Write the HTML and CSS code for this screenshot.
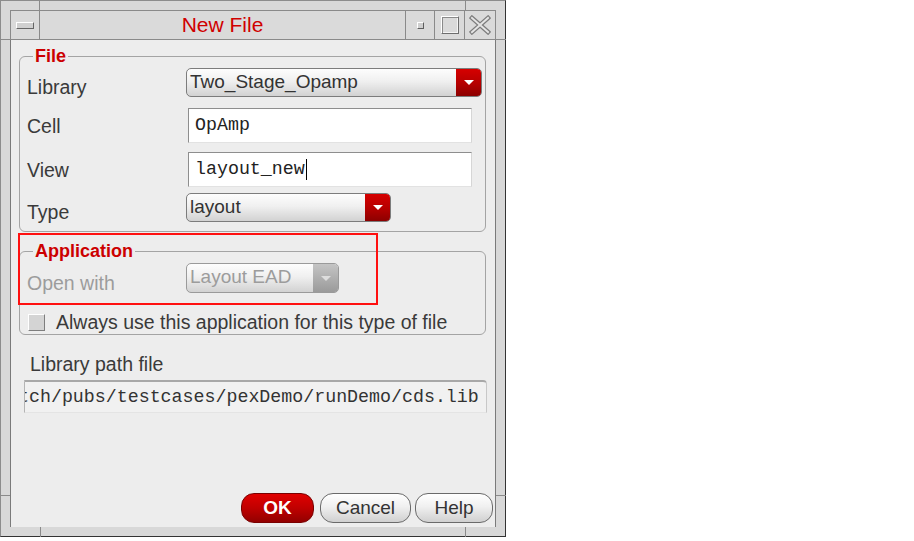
FILE: index.html
```html
<!DOCTYPE html>
<html>
<head>
<meta charset="utf-8">
<title>New File</title>
<link rel="stylesheet" href="styles.css">
</head>
<body>
<div class="window">
  <div class="titlebar">
    <div class="tb-btn tb-menu"><span class="bar"></span></div>
    <div class="title">New File</div>
    <div class="tb-btn tb-min"><span class="dot"></span></div>
    <div class="tb-btn tb-max"><span class="sq"></span></div>
    <div class="tb-btn tb-close">
      <svg width="22" height="20" viewBox="0 0 22 20">
        <path d="M3 3 L19 17 M19 3 L3 17" stroke="#7c7c7c" stroke-width="4.5" stroke-linecap="square" fill="none"/>
        <path d="M3 3 L19 17 M19 3 L3 17" stroke="#e4e4e4" stroke-width="2" stroke-linecap="square" fill="none"/>
      </svg>
    </div>
  </div>
  <div class="content">
    <fieldset class="group group-file">
      <legend>File</legend>
      <div class="row row-end">
        <span class="label">Library</span>
        <div class="combo combo-lib"><span class="combo-text">Two_Stage_Opamp</span><span class="arrow"><span class="tri"></span></span></div>
      </div>
      <div class="row row-cell">
        <span class="label">Cell</span>
        <div class="entry">OpAmp</div>
      </div>
      <div class="row row-view">
        <span class="label">View</span>
        <div class="entry">layout_new<span class="caret"></span></div>
      </div>
      <div class="row row-end row-type">
        <span class="label">Type</span>
        <div class="combo combo-type"><span class="combo-text">layout</span><span class="arrow"><span class="tri"></span></span></div>
      </div>
    </fieldset>
    <fieldset class="group group-app">
      <legend>Application</legend>
      <div class="row row-end">
        <span class="label label-dis">Open with</span>
        <div class="combo combo-dis"><span class="combo-text">Layout EAD</span><span class="arrow"><span class="tri"></span></span></div>
      </div>
      <div class="check-row">
        <span class="checkbox"></span>
        <span class="check-text">Always use this application for this type of file</span>
      </div>
    </fieldset>
    <div class="path-label">Library path file</div>
    <div class="path-entry">tch/pubs/testcases/pexDemo/runDemo/cds.lib</div>
    <div class="buttons">
      <div class="btn btn-ok">OK</div>
      <div class="btn btn-cancel">Cancel</div>
      <div class="btn btn-help">Help</div>
    </div>
    <div class="highlight"></div>
  </div>
  <span class="notch nv n-tl"></span>
  <span class="notch nh n-lt"></span>
  <span class="notch nv n-tr"></span>
  <span class="notch nh n-rt"></span>
  <span class="notch nh n-lb"></span>
  <span class="notch nv n-bl"></span>
  <span class="notch nh n-rb"></span>
  <span class="notch nv n-br"></span>
</div>
</body>
</html>
```
FILE: styles.css
```css
body {
  margin: 0;
  background: #ffffff;
  font-family: "Liberation Sans", Arial, sans-serif;
}

.window {
  position: relative;
  box-sizing: border-box;
  width: 506px;
  height: 537px;
  border: 1px solid;
  border-color: #8c8c8c #333333 #333333 #8c8c8c;
  padding: 9px;
  background: #d8d8d8;
  display: flex;
  flex-direction: column;
}

/* title bar */
.titlebar {
  box-sizing: border-box;
  height: 30px;
  flex: none;
  display: flex;
  border: 1px solid #8a8a8a;
  background: #dadada;
}
.tb-btn {
  flex: none;
  display: flex;
  align-items: center;
  justify-content: center;
}
.tb-menu {
  width: 28px;
  border-right: 1px solid #8a8a8a;
}
.tb-min {
  width: 28px;
  border-left: 1px solid #8a8a8a;
}
.tb-max {
  width: 29px;
  border-left: 1px solid #8a8a8a;
}
.tb-close {
  width: 30px;
  border-left: 1px solid #8a8a8a;
}
.bar {
  box-sizing: border-box;
  width: 18px;
  height: 7px;
  background: #d0d0d0;
  border: 1px solid;
  border-color: #ffffff #666666 #666666 #ffffff;
}
.dot {
  box-sizing: border-box;
  width: 7px;
  height: 7px;
  background: #cfcfcf;
  border: 1px solid;
  border-color: #ffffff #5e5e5e #5e5e5e #ffffff;
}
.sq {
  box-sizing: border-box;
  width: 18px;
  height: 18px;
  border: 1px solid;
  border-color: #ffffff #6e6e6e #6e6e6e #ffffff;
  box-shadow: inset 1px 1px 0 #8a8a8a, inset -1px -1px 0 #f4f4f4;
}
.title {
  flex: 1;
  text-align: center;
  color: #d00000;
  font-size: 21px;
  line-height: 28px;
}

/* content */
.content {
  flex: 1;
  position: relative;
  display: flex;
  flex-direction: column;
  background: #ededed;
  border-left: 1px solid #7a7a7a;
  border-right: 1px solid #7a7a7a;
  padding-bottom: 4px;
}

.group {
  margin: 0 9px 0 8px;
  padding: 2px 3px 9px 7px;
  border: 1px solid #a4a4a4;
  border-radius: 6px;
  min-width: 0;
}
.group-file {
  margin-top: 6px;
}
.group-app {
  margin-top: 9px;
  padding-bottom: 3px;
}
.group legend {
  margin-left: 6px;
  padding: 0 2px;
  color: #cc0000;
  font-weight: bold;
  font-size: 18px;
  line-height: 20px;
}

.row {
  display: flex;
  align-items: center;
}
.row-end {
  align-items: flex-end;
}
.row-cell {
  margin-top: 11px;
}
.row-view {
  margin-top: 9px;
}
.row-type {
  margin-top: 6px;
}

.label {
  flex: none;
  width: 159px;
  font-size: 19.5px;
  line-height: 20px;
  color: #3a3a3a;
}
.label-dis {
  color: #9c9c9c;
}

/* combo boxes */
.combo {
  box-sizing: border-box;
  height: 29px;
  display: flex;
  border: 1px solid #7c7c7c;
  border-radius: 5px;
  background: linear-gradient(#fdfdfd, #f0f0f0 45%, #d2d2d2);
  overflow: hidden;
}
.combo-lib {
  flex: 1;
}
.combo-type {
  width: 205px;
}
.combo-dis {
  width: 153px;
  height: 30px;
  border-color: #9a9a9a;
}
.combo-text {
  flex: 1;
  padding-left: 3px;
  font-size: 19px;
  line-height: 26px;
  color: #333333;
  white-space: nowrap;
}
.combo-dis .combo-text {
  color: #9c9c9c;
}
.arrow {
  flex: none;
  width: 25px;
  display: flex;
  align-items: center;
  justify-content: center;
  background: linear-gradient(#d60000, #b40000 55%, #8c0000);
}
.combo-dis .arrow {
  background: linear-gradient(#c4c4c4, #adadad 55%, #9a9a9a);
}
.tri {
  width: 0;
  height: 0;
  border-left: 5px solid transparent;
  border-right: 5px solid transparent;
  border-top: 5px solid #ffffff;
}
.combo-dis .tri {
  border-top-color: #dddddd;
}

/* entries */
.entry {
  box-sizing: border-box;
  width: 284px;
  height: 35px;
  margin-left: 2px;
  padding-left: 6px;
  background: #ffffff;
  border: 1px solid;
  border-color: #8e8e8e #d6d6d6 #e2e2e2 #8e8e8e;
  font-family: "Liberation Mono", "Courier New", monospace;
  font-size: 18.3px;
  line-height: 33px;
  color: #222222;
  white-space: nowrap;
  display: flex;
  align-items: center;
}
.caret {
  display: inline-block;
  width: 0;
  height: 21px;
  border-left: 1px solid #000000;
  margin-left: 1px;
}

/* checkbox */
.check-row {
  margin-top: 20px;
  height: 18px;
  display: flex;
  align-items: center;
}
.checkbox {
  flex: none;
  box-sizing: border-box;
  width: 17px;
  height: 17px;
  margin-left: 1px;
  margin-right: 11px;
  background: #d4d4d4;
  border: 1px solid;
  border-color: #ffffff #7e7e7e #7e7e7e #ffffff;
}
.check-text {
  font-size: 19.5px;
  line-height: 20px;
  color: #3a3a3a;
  white-space: nowrap;
}

/* library path */
.path-label {
  margin: 19px 0 0 19px;
  font-size: 19.5px;
  line-height: 20px;
  color: #3a3a3a;
}
.path-entry {
  box-sizing: border-box;
  width: 463px;
  height: 33px;
  margin: 6px 0 0 13px;
  background: #f1f1f1;
  border-top: 2px solid #a8a8a8;
  border-left: 1px solid #b4b4b4;
  border-right: 1px solid #c8c8c8;
  border-bottom: 1px solid #e4e4e4;
  border-radius: 0 4px 0 0;
  overflow: hidden;
  white-space: nowrap;
  text-indent: -7px;
  font-family: "Liberation Mono", "Courier New", monospace;
  font-size: 18.3px;
  line-height: 30px;
  color: #333333;
}

/* buttons */
.buttons {
  margin-top: auto;
  display: flex;
  justify-content: flex-end;
  padding-right: 2px;
}
.btn {
  box-sizing: border-box;
  height: 30px;
  border-radius: 13px;
  font-size: 19px;
  line-height: 28px;
  text-align: center;
  color: #333333;
  border: 1px solid #6a6a6a;
  background: linear-gradient(#ffffff, #f0f0f0 45%, #d0d0d0);
}
.btn-ok {
  width: 73px;
  color: #ffffff;
  font-weight: bold;
  border-color: #7a0000;
  background: linear-gradient(#e00000, #c00000 50%, #920000);
}
.btn-cancel {
  width: 91px;
  margin-left: 6px;
}
.btn-help {
  width: 78px;
  margin-left: 4px;
}

/* annotation overlay */
.highlight {
  position: absolute;
  left: 7px;
  top: 193px;
  width: 360px;
  height: 72px;
  box-sizing: border-box;
  border: 2px solid #ff1010;
}

/* frame corner notches */
.notch {
  position: absolute;
  background: #8a8a8a;
}
.nv {
  width: 1px;
  height: 10px;
}
.nh {
  width: 10px;
  height: 1px;
}
.n-tl { left: 38px; top: -1px; }
.n-lt { left: -1px; top: 38px; }
.n-tr { left: 464px; top: -1px; }
.n-rt { left: 495px; top: 38px; }
.n-lb { left: -1px; top: 494px; }
.n-bl { left: 39px; top: 526px; }
.n-rb { left: 495px; top: 494px; }
.n-br { left: 464px; top: 526px; }
```
